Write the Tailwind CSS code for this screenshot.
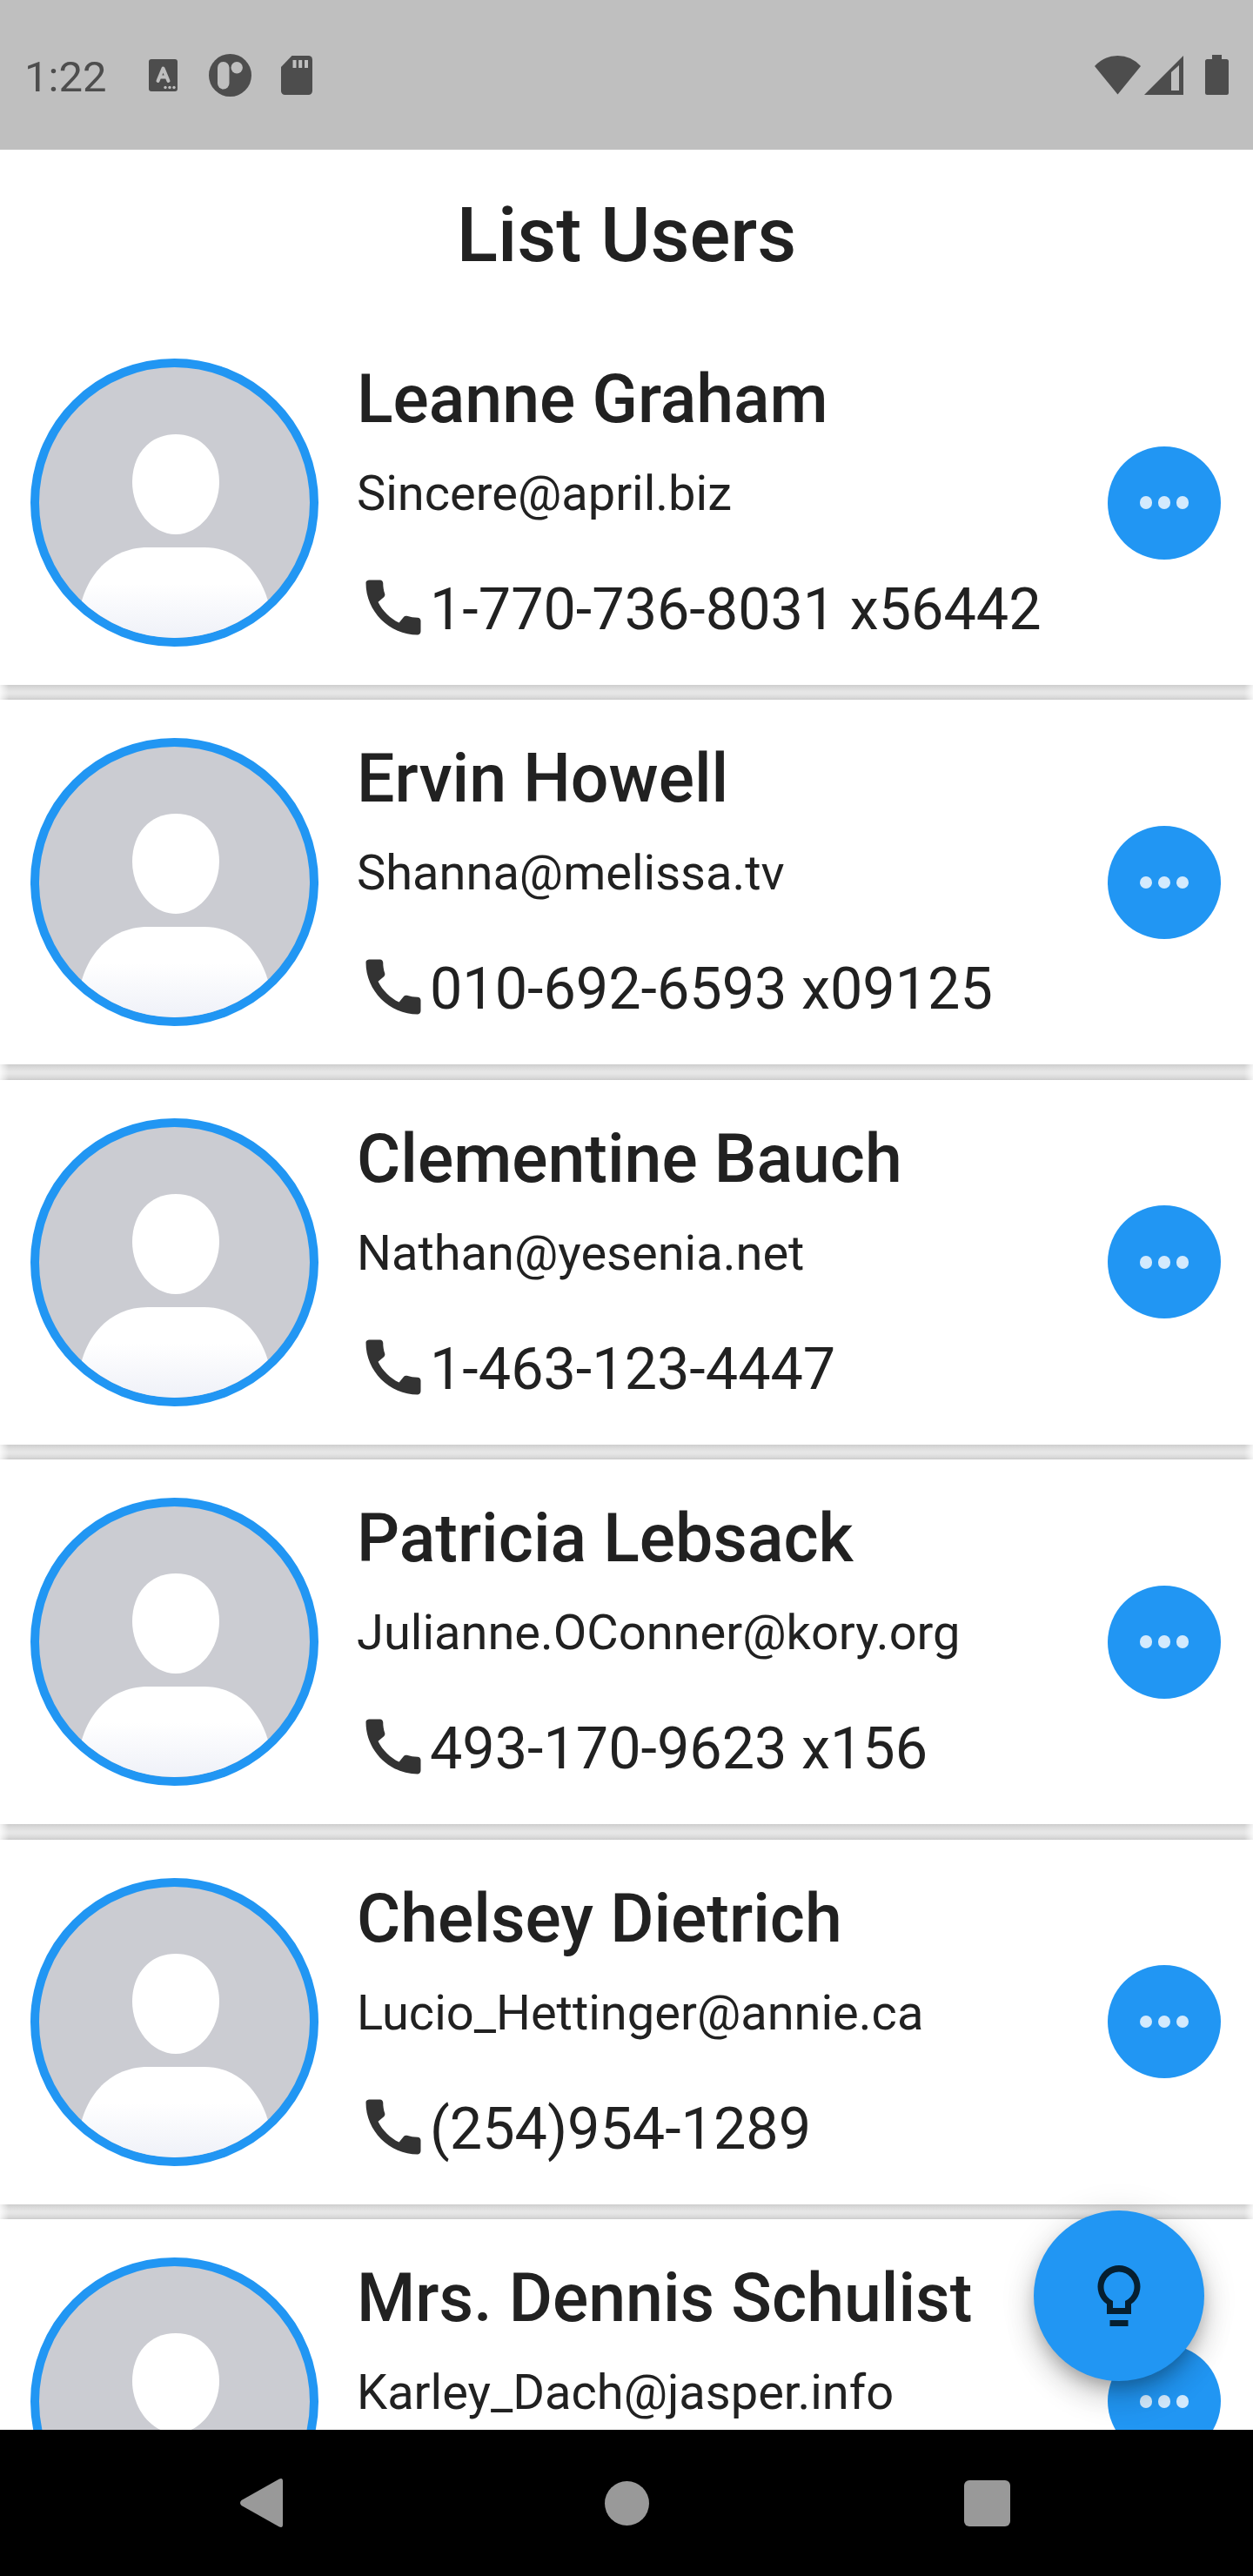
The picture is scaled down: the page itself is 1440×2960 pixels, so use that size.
<!DOCTYPE html>
<html lang="en">
<head>
<meta charset="utf-8">
<title>List Users</title>
<script src="https://cdn.jsdelivr.net/npm/@tailwindcss/browser@4"></script>
</head>
<body class="bg-white font-['Roboto',sans-serif]">
<div class="relative flex h-[2960px] w-[1440px] flex-col overflow-hidden bg-white text-[#212121]">
  <header class="flex h-[172px] shrink-0 items-center justify-between bg-[#bfbfbf] pl-[28px] pr-[28px] text-[#4d4d4d]">
    <div class="flex items-center">
      <span class="w-[143px] pt-1 text-[49px] leading-none">1:22</span>
      <svg class="h-[37px] w-[33px]" viewBox="0 0 33 37"><rect width="33" height="37" rx="3" fill="#4d4d4d"/><path d="M10.500 25 16.500 10.500 22.500 25M13 20.500h7" fill="none" stroke="#bfbfbf" stroke-width="4" stroke-linecap="round" stroke-linejoin="round"/><g fill="#bfbfbf"><circle cx="19" cy="32.500" r="1.700"/><circle cx="24" cy="32.500" r="1.700"/><circle cx="29" cy="32.500" r="1.700"/></g></svg>
      <svg class="ml-9 h-[49px] w-[49px]" viewBox="0 0 49 49"><circle cx="24.500" cy="24.500" r="24.500" fill="#4d4d4d"/><rect x="10" y="9" width="13.500" height="31.500" rx="6.700" fill="#bfbfbf"/><circle cx="32.200" cy="15.700" r="6.700" fill="#bfbfbf"/></svg>
      <svg class="ml-[34px] h-[45px] w-9" viewBox="0 0 36 45"><path d="M12.500 0H31.500A4.500 4.500 0 0 1 36 4.500V40.500A4.500 4.500 0 0 1 31.500 45H4.500A4.500 4.500 0 0 1 0 40.500V13Z" fill="#4d4d4d"/><path d="M13.500 5h4v9h-4zM20.200 5h4v9h-4zM27 5h4v9h-4z" fill="#bfbfbf"/></svg>
    </div>
    <div class="flex items-center">
      <svg class="h-[45px] w-[53px]" viewBox="0 0 53 45"><path d="M0 12Q11 0 26.500 0T53 12L26.500 44.500Z" fill="currentColor"/></svg>
      <svg class="ml-1 h-[45px] w-[45px]" viewBox="0 0 45 45"><path d="M0 45 45 0V45ZM31 19V40H40V11Z" fill="currentColor" fill-rule="evenodd"/></svg>
      <svg class="ml-[25px] h-[46px] w-[27px]" viewBox="0 0 27 46"><path d="M8 0H19V5H24.500A2.500 2.500 0 0 1 27 7.500V43.500A2.500 2.500 0 0 1 24.500 46H2.500A2.500 2.500 0 0 1 0 43.500V7.500A2.500 2.500 0 0 1 2.500 5H8Z" fill="currentColor"/></svg>
    </div>
  </header>
  <h1 class="flex h-[196px] shrink-0 items-center justify-center pt-0.5 text-[87.5px] font-medium leading-none">List Users</h1>

  <main id="users" class="flex h-[2424px] shrink-0 flex-col overflow-hidden"></main>

  <button class="absolute left-[1188px] top-[2540px] flex h-[196px] w-[196px] items-center justify-center rounded-full bg-[#2196f3] shadow-[0_10px_17px_-3px_rgba(0,0,0,0.200),0_21px_35px_rgba(0,0,0,0.140),0_4px_42px_rgba(0,0,0,0.120)]" aria-label="Tips">
    <svg class="h-[84px] w-[84px]" viewBox="0 0 24 24" fill="#061f30"><path d="M12 2a7 7 0 0 0-4 12.740V18h8v-3.260A7 7 0 0 0 12 2Zm2 11.700V16h-4v-2.300A5 5 0 1 1 14 13.700ZM9 20h6v2H9z" fill-rule="evenodd"/></svg>
  </button>

  <nav class="absolute inset-x-0 bottom-0 flex h-[168px] items-center bg-black pl-[276px]">
    <svg class="h-14 w-[49px]" viewBox="0 0 49 56"><path d="M1.500 25 44.500 .800Q49-1.500 49 3V53Q49 57.500 44.500 55.200L1.500 31Q-1.500 28 1.500 25Z" fill="#999"/></svg>
    <span class="ml-[369.500px] h-[51px] w-[51px] rounded-full bg-[#999]"></span>
    <span class="ml-[362.500px] h-[53px] w-[53px] rounded-[6px] bg-[#999]"></span>
  </nav>
</div>

<template id="row">
  <article class="flex h-[419px] shrink-0 items-center bg-white pl-[35px] pr-[37px]">
    <div class="h-[331px] w-[331px] shrink-0 overflow-hidden rounded-full border-[10px] border-[#2196f3] bg-[#cbccd2]">
      <svg class="h-full w-full" viewBox="0 0 311 311"><defs><linearGradient id="body" x1="0" y1="207" x2="0" y2="311" gradientUnits="userSpaceOnUse"><stop offset=".4" stop-color="#fff"/><stop offset="1" stop-color="#eff1f8"/></linearGradient></defs><path d="M157 77C187 77 207 100 207 132 207 163 185 192 157 192S107 163 107 132C107 100 127 77 157 77Z" fill="#fff"/><path d="M44 311C42 250 75 207 125 207H190C236 207 270 250 268 311Z" fill="url(#body)"/></svg>
    </div>
    <div class="ml-[44px] flex h-[331px] flex-1 flex-col whitespace-nowrap pt-px">
      <h2 class="name text-[77px] font-medium leading-[92px]"></h2>
      <p class="email mt-[29px] text-[56px] leading-[66px]"></p>
      <p class="mt-[56px] flex items-center text-[66.500px] leading-[78px]"><svg class="h-[84px] w-[84px]" viewBox="0 0 24 24" fill="#333"><path d="M20.010 15.380c-1.230 0-2.420-.200-3.530-.560-.350-.120-.740-.030-1.010.240l-1.570 1.970c-2.830-1.350-5.480-3.900-6.890-6.830l1.950-1.660c.270-.280.350-.670.240-1.020-.370-1.110-.560-2.300-.560-3.530 0-.540-.450-.990-.990-.990H4.190C3.650 3 3 3.240 3 3.990 3 13.280 10.730 21 20.010 21c.710 0 .990-.630.990-1.180v-3.450c0-.540-.450-.990-.990-.990z"/></svg><span class="phone pt-1"></span></p>
    </div>
    <button class="flex h-[130px] w-[130px] shrink-0 items-center justify-center gap-[6.500px] rounded-full bg-[#2196f3]" aria-label="More">
      <i class="h-[14.500px] w-[14.500px] rounded-full bg-[#d3eafd]"></i><i class="h-[14.500px] w-[14.500px] rounded-full bg-[#d3eafd]"></i><i class="h-[14.500px] w-[14.500px] rounded-full bg-[#d3eafd]"></i>
    </button>
  </article>
  <div class="h-[17.400px] shrink-0 bg-[linear-gradient(#cdcdcd,#dadada_20%,#e6e6e6_45%,#e6e6e6_60%,#d9d9d9_85%,#cbcbcb)]">
    <div class="h-full bg-[linear-gradient(90deg,rgba(255,255,255,0.750),transparent_10px,transparent_1430px,rgba(255,255,255,0.750))]"></div>
  </div>
</template>
<script>
const users = [
  ["Leanne Graham", "Sincere@april.biz", "1-770-736-8031 x56442"],
  ["Ervin Howell", "Shanna@melissa.tv", "010-692-6593 x09125"],
  ["Clementine Bauch", "Nathan@yesenia.net", "1-463-123-4447"],
  ["Patricia Lebsack", "Julianne.OConner@kory.org", "493-170-9623 x156"],
  ["Chelsey Dietrich", "Lucio_Hettinger@annie.ca", "(254)954-1289"],
  ["Mrs. Dennis Schulist", "Karley_Dach@jasper.info", ""]
];
for (const [name, email, phone] of users) {
  const row = document.getElementById("row").content.cloneNode(true);
  row.querySelector(".name").textContent = name;
  row.querySelector(".email").textContent = email;
  row.querySelector(".phone").textContent = phone;
  document.getElementById("users").append(row);
}
</script>
</body>
</html>
